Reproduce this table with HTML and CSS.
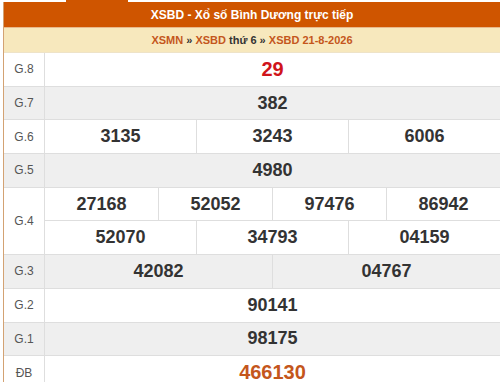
FILE: index.html
```html
<!DOCTYPE html>
<html lang="vi">
<head>
<meta charset="utf-8">
<link rel="stylesheet" href="styles.css">
</head>
<body>
<div class="box">
  <div class="head">XSBD - Xổ số Bình Dương trực tiếp</div>
  <div class="sub"><a class="lnk">XSMN</a> » <a class="lnk">XSBD</a> thứ 6 » <a class="lnk">XSBD 21-8-2026</a></div>
  <div class="tbl">
    <div class="row"><div class="lbl">G.8</div><div class="cells"><div class="cell red">29</div></div></div>
    <div class="row alt"><div class="lbl">G.7</div><div class="cells"><div class="cell">382</div></div></div>
    <div class="row"><div class="lbl">G.6</div><div class="cells"><div class="cell">3135</div><div class="cell">3243</div><div class="cell">6006</div></div></div>
    <div class="row alt"><div class="lbl">G.5</div><div class="cells"><div class="cell">4980</div></div></div>
    <div class="row double"><div class="lbl">G.4</div>
      <div class="stack">
        <div class="cells sr"><div class="cell">27168</div><div class="cell">52052</div><div class="cell">97476</div><div class="cell">86942</div></div>
        <div class="cells"><div class="cell">52070</div><div class="cell">34793</div><div class="cell">04159</div></div>
      </div>
    </div>
    <div class="row alt"><div class="lbl">G.3</div><div class="cells"><div class="cell">42082</div><div class="cell">04767</div></div></div>
    <div class="row"><div class="lbl">G.2</div><div class="cells"><div class="cell">90141</div></div></div>
    <div class="row alt"><div class="lbl">G.1</div><div class="cells"><div class="cell">98175</div></div></div>
    <div class="row"><div class="lbl">ĐB</div><div class="cells"><div class="cell db">466130</div></div></div>
  </div>
</div>
</body>
</html>
```

FILE: styles.css
```css
html, body {
  margin: 0;
  padding: 0;
  background: #fff;
  font-family: "Liberation Sans", Arial, sans-serif;
  overflow: hidden;
}
.box {
  margin: 2px 0 0 3px;
  border-left: 1px solid #d3a273;
}
.head {
  position: relative;
  height: 25px;
  background: #cf5500;
  color: #fff;
  font-weight: bold;
  font-size: 12px;
  display: flex;
  align-items: center;
  justify-content: center;
}
.head::before {
  content: "";
  position: absolute;
  left: 62px;
  top: -2px;
  width: 62px;
  height: 2px;
  background: #cf5500;
}
.sub {
  height: 24px;
  background: #f7e8bd;
  border-top: 1px solid #e9b98c;
  border-bottom: 1px solid #eee3c8;
  color: #333;
  font-weight: bold;
  font-size: 11px;
  display: flex;
  align-items: center;
  justify-content: center;
  white-space: pre;
}
.lnk {
  color: #c4561c;
}
.row {
  display: flex;
  height: 33.7px;
  box-sizing: border-box;
  border-bottom: 1px solid #dedede;
  background: #fff;
}
.row.alt {
  background: #efefef;
}
.row.double {
  height: 67.4px;
}
.lbl {
  width: 40px;
  flex: none;
  border-right: 1px solid #dedede;
  display: flex;
  align-items: center;
  justify-content: center;
  font-size: 12px;
  color: #555;
}
.stack {
  flex: 1;
  display: flex;
  flex-direction: column;
}
.stack .cells {
  flex: 1;
}
.cells.sr {
  border-bottom: 1px solid #dedede;
}
.cells {
  flex: 1;
  display: flex;
}
.cell {
  flex: 1;
  display: flex;
  align-items: center;
  justify-content: center;
  font-size: 18px;
  font-weight: bold;
  color: #333;
}
.cell + .cell {
  border-left: 1px solid #dedede;
}
.cell.red {
  color: #d0141b;
  font-size: 20px;
}
.cell.db {
  color: #c4561c;
  font-size: 20px;
}
```
